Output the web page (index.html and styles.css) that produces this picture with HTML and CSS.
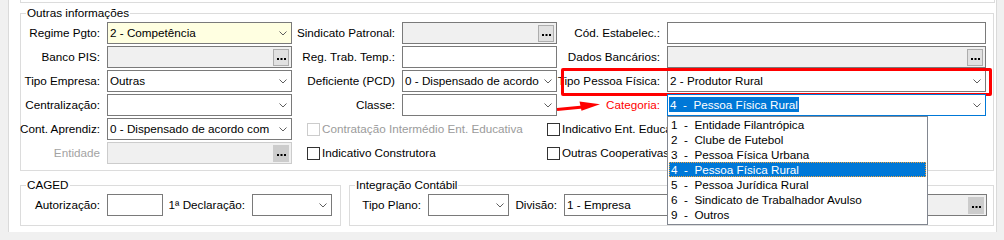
FILE: index.html
```html
<!DOCTYPE html>
<html lang="pt">
<head>
<meta charset="utf-8">
<title>Outras informações</title>
<link rel="stylesheet" href="styles.css">
</head>
<body>
<div class="panel">
  <div class="prev-box"></div>

  <fieldset class="group main">
    <legend>Outras informações</legend>
    <div class="form">
      <!-- row 1 -->
      <span class="lbl">Regime Pgto:</span>
      <div class="combo yellow"><span class="val">2 - Competência</span><span class="arrow"><svg width="8" height="5" viewBox="0 0 8 5"><polyline points="0.5,0.5 4,4 7.5,0.5" /></svg></span></div>
      <span class="lbl">Sindicato Patronal:</span>
      <div class="lookup"><span class="val"></span><span class="btn"><svg width="9" height="2" viewBox="0 0 9 2"><rect x="0" y="0" width="2" height="2"/><rect x="3.5" y="0" width="2" height="2"/><rect x="7" y="0" width="2" height="2"/></svg></span></div>
      <span class="lbl">Cód. Estabelec.:</span>
      <div class="edit"></div>

      <!-- row 2 -->
      <span class="lbl">Banco PIS:</span>
      <div class="lookup"><span class="val"></span><span class="btn"><svg width="9" height="2" viewBox="0 0 9 2"><rect x="0" y="0" width="2" height="2"/><rect x="3.5" y="0" width="2" height="2"/><rect x="7" y="0" width="2" height="2"/></svg></span></div>
      <span class="lbl">Reg. Trab. Temp.:</span>
      <div class="edit"></div>
      <span class="lbl">Dados Bancários:</span>
      <div class="lookup"><span class="val"></span><span class="btn"><svg width="9" height="2" viewBox="0 0 9 2"><rect x="0" y="0" width="2" height="2"/><rect x="3.5" y="0" width="2" height="2"/><rect x="7" y="0" width="2" height="2"/></svg></span></div>

      <!-- row 3 -->
      <span class="lbl">Tipo Empresa:</span>
      <div class="combo"><span class="val">Outras</span><span class="arrow"><svg width="8" height="5" viewBox="0 0 8 5"><polyline points="0.5,0.5 4,4 7.5,0.5" /></svg></span></div>
      <span class="lbl">Deficiente (PCD)</span>
      <div class="combo"><span class="val">0 - Dispensado de acordo</span><span class="arrow"><svg width="8" height="5" viewBox="0 0 8 5"><polyline points="0.5,0.5 4,4 7.5,0.5" /></svg></span></div>
      <span class="lbl">Tipo Pessoa Física:</span>
      <div class="combo framed"><span class="val">2 - Produtor Rural</span><span class="arrow"><svg width="8" height="5" viewBox="0 0 8 5"><polyline points="0.5,0.5 4,4 7.5,0.5" /></svg></span><span class="red-frame"></span></div>

      <!-- row 4 -->
      <span class="lbl">Centralização:</span>
      <div class="combo"><span class="val"></span><span class="arrow"><svg width="8" height="5" viewBox="0 0 8 5"><polyline points="0.5,0.5 4,4 7.5,0.5" /></svg></span></div>
      <span class="lbl">Classe:</span>
      <div class="combo"><span class="val"></span><span class="arrow"><svg width="8" height="5" viewBox="0 0 8 5"><polyline points="0.5,0.5 4,4 7.5,0.5" /></svg></span></div>
      <span class="lbl red arrow-host">Categoria:<svg class="red-arrow" width="46" height="12" viewBox="0 0 46 12"><line x1="1" y1="9.6" x2="27" y2="7" /><polygon points="23.5,1.6 44,4.3 25.5,10.8" /></svg></span>
      <div class="combo focused">
        <span class="val"><span class="sel">4  -  Pessoa Física Rural</span></span>
        <span class="arrow"><svg width="8" height="5" viewBox="0 0 8 5"><polyline points="0.5,0.5 4,4 7.5,0.5" /></svg></span>
        <ul class="dropdown">
          <li>1  -  Entidade Filantrópica</li>
          <li>2  -  Clube de Futebol</li>
          <li>3  -  Pessoa Física Urbana</li>
          <li class="active">4  -  Pessoa Física Rural</li>
          <li>5  -  Pessoa Jurídica Rural</li>
          <li>6  -  Sindicato de Trabalhador Avulso</li>
          <li>9  -  Outros</li>
        </ul>
      </div>

      <!-- row 5 -->
      <span class="lbl">Cont. Aprendiz:</span>
      <div class="combo"><span class="val">0 - Dispensado de acordo com</span><span class="arrow"><svg width="8" height="5" viewBox="0 0 8 5"><polyline points="0.5,0.5 4,4 7.5,0.5" /></svg></span></div>
      <div class="checks">
        <label class="chk disabled"><span class="box"></span>Contratação Intermédio Ent. Educativa</label>
        <label class="chk"><span class="box"></span>Indicativo Ent. Educativa</label>
      </div>

      <!-- row 6 -->
      <span class="lbl muted">Entidade</span>
      <div class="lookup disabled"><span class="val"></span><span class="btn"><svg width="9" height="2" viewBox="0 0 9 2"><rect x="0" y="0" width="2" height="2"/><rect x="3.5" y="0" width="2" height="2"/><rect x="7" y="0" width="2" height="2"/></svg></span></div>
      <div class="checks">
        <label class="chk"><span class="box"></span>Indicativo Construtora</label>
        <label class="chk"><span class="box"></span>Outras Cooperativas</label>
      </div>
    </div>
  </fieldset>

  <div class="bottom-row">
    <fieldset class="group caged">
      <legend>CAGED</legend>
      <div class="caged-grid">
        <span class="lbl">Autorização:</span>
        <div class="edit"></div>
        <span class="lbl">1ª Declaração:</span>
        <div class="combo"><span class="val"></span><span class="arrow"><svg width="8" height="5" viewBox="0 0 8 5"><polyline points="0.5,0.5 4,4 7.5,0.5" /></svg></span></div>
      </div>
    </fieldset>
    <fieldset class="group integ">
      <legend>Integração Contábil</legend>
      <div class="integ-grid">
        <span class="lbl">Tipo Plano:</span>
        <div class="combo"><span class="val"></span><span class="arrow"><svg width="8" height="5" viewBox="0 0 8 5"><polyline points="0.5,0.5 4,4 7.5,0.5" /></svg></span></div>
        <span class="lbl">Divisão:</span>
        <div class="edit"><span class="val">1 - Empresa</span></div>
        <div class="lookup"><span class="val"></span><span class="btn dark"><svg width="9" height="2" viewBox="0 0 9 2"><rect x="0" y="0" width="2" height="2"/><rect x="3.5" y="0" width="2" height="2"/><rect x="7" y="0" width="2" height="2"/></svg></span></div>
      </div>
    </fieldset>
  </div>
</div>
</body>
</html>
```

FILE: styles.css
```css
html, body {
  margin: 0;
  padding: 0;
}

body {
  background: #f0f0f0;
  font-family: "Liberation Sans", Arial, sans-serif;
  font-size: 11.7px;
  line-height: 16px;
  color: #000;
}

.panel {
  margin-left: 8px;
  width: 989px;
  height: 232px;
  box-sizing: border-box;
  background: #fff;
  border-left: 1px solid #dadada;
  border-right: 1px solid #dadada;
  padding: 0 2px 0 11px;
  overflow: hidden;
}

.prev-box {
  height: 2px;
  border: 1px solid #dcdcdc;
  border-top: none;
  margin-right: -1px;
}

.group {
  margin: 2px 0 0;
  padding: 1px 7px 6px 0;
  border: 1px solid #dcdcdc;
  min-width: 0;
}

.group legend {
  margin-left: 5px;
  padding: 0 1px;
  line-height: 16px;
}

/* main form grid */
.form {
  display: grid;
  grid-template-columns: 79px 185px 96px 155px 96px 319px;
  grid-auto-rows: 22px;
  column-gap: 7px;
  row-gap: 2px;
}

.lbl {
  display: flex;
  align-items: center;
  justify-content: flex-end;
  white-space: nowrap;
  min-width: 0;
}

.lbl.muted { color: #a3a3a3; }
.lbl.red { color: #ff0000; }

.edit,
.combo,
.lookup {
  box-sizing: border-box;
  border: 1px solid #7a7a7a;
  background: #fff;
  display: flex;
  align-items: center;
  min-width: 0;
}

.val {
  flex: 1;
  min-width: 0;
  padding-left: 2px;
  white-space: pre;
  overflow: hidden;
}

.combo.yellow { background: #ffffe1; }

.arrow {
  width: 17px;
  display: flex;
  justify-content: center;
  align-items: center;
  flex: none;
}

.arrow svg polyline {
  fill: none;
  stroke: #5f5f5f;
  stroke-width: 1;
}

.lookup { background: #f0f0f0; }

.btn {
  flex: none;
  width: 16px;
  height: 17px;
  margin-right: 2px;
  box-sizing: border-box;
  background: #e1e1e1;
  border: 1px solid #adadad;
  display: flex;
  justify-content: center;
  align-items: flex-start;
  padding-top: 8px;
}

.btn svg rect { fill: #000; }

.lookup.disabled { border-color: #cccccc; }
.lookup.disabled .btn,
.btn.dark {
  background: #cccccc;
  border-color: #cccccc;
}

/* focused combo with open list */
.combo.focused {
  border-color: #0078d7;
  position: relative;
}

.combo.focused .val { padding-left: 1px; }

.sel {
  background: #0078d7;
  color: #fff;
  padding: 0 1px;
  display: inline-block;
  line-height: 15px;
}

.dropdown {
  position: absolute;
  left: -1px;
  top: 21px;
  z-index: 10;
  width: 261px;
  box-sizing: border-box;
  margin: 0;
  padding: 0 1px 2px;
  list-style: none;
  background: #fff;
  border: 1px solid #828790;
}

.dropdown li {
  height: 15px;
  line-height: 15px;
  padding-left: 2px;
  white-space: pre;
  box-sizing: border-box;
}

.dropdown li.active {
  background: #0078d7;
  color: #fff;
  outline: 1px dotted #f3a33c;
  outline-offset: -1px;
}

/* red annotation */
.combo.framed { position: relative; }

.red-frame {
  position: absolute;
  left: -107px;
  right: -7px;
  top: -3px;
  bottom: -5px;
  border: 3px solid #ff0000;
  border-radius: 2px;
  pointer-events: none;
}

.arrow-host { position: relative; }

.red-arrow {
  position: absolute;
  left: -8px;
  top: 6px;
}

.red-arrow line {
  stroke: #ff0000;
  stroke-width: 3;
}

.red-arrow polygon { fill: #ff0000; }

/* checkboxes */
.checks {
  grid-column: 3 / 7;
  display: grid;
  grid-template-columns: 240px auto;
  padding-left: 8px;
  align-items: center;
  white-space: nowrap;
}

.chk {
  display: flex;
  align-items: center;
  gap: 2px;
}

.box {
  width: 13px;
  height: 13px;
  box-sizing: border-box;
  border: 1px solid #333;
  background: #fff;
  flex: none;
}

.chk.disabled { color: #9b9b9b; }
.chk.disabled .box { border-color: #cccccc; }

/* bottom groups */
.bottom-row {
  display: flex;
  gap: 8px;
  margin-top: 6px;
}

.bottom-row .group {
  margin: 0;
  padding: 1px 0 9px 0;
}

.caged {
  width: 321px;
  box-sizing: border-box;
  flex: none;
}

.integ {
  flex: 1;
}

.bottom-row .group.integ { padding-right: 6px; }

.caged-grid {
  display: grid;
  grid-template-columns: 79px 56px 75px 80px;
  grid-auto-rows: 22px;
  column-gap: 7px;
}

.integ-grid {
  display: grid;
  grid-template-columns: 71px 81px 41px 120px 1fr;
  grid-auto-rows: 22px;
  column-gap: 7px;
}
```
